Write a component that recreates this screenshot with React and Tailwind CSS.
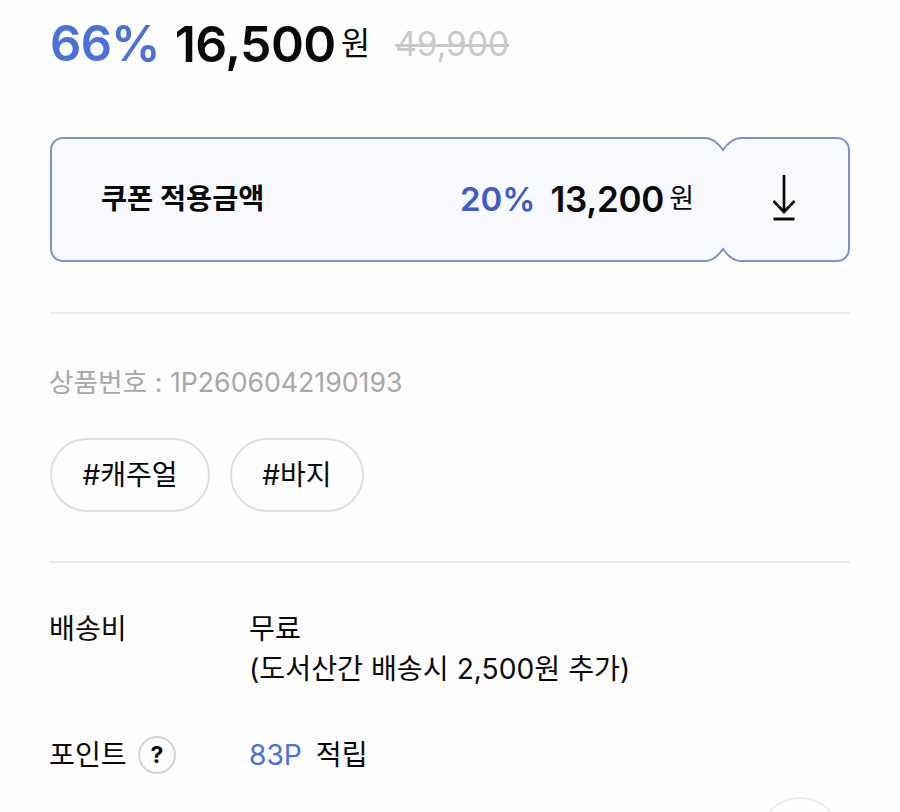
import React from 'react';

const Notch = ({ flip }) => (
  <svg
    width="44"
    height="16"
    viewBox="0 0 44 16"
    fill="none"
    className={flip ? 'absolute left-[649px] bottom-[-2px] rotate-180' : 'absolute left-[649px] top-[-2px]'}
  >
    <path d="M0 0H44V1H40C32 1 27 6 22 13C17 6 12 1 4 1H0Z" fill="#fdfdfd" />
    <path d="M0 1H4C12 1 17 6 22 13C27 6 32 1 40 1H44" stroke="#7e90d2" strokeWidth="2" />
  </svg>
);

const App = () => {
  return (
    <div className="relative h-[812px] w-[900px] overflow-hidden bg-[#fdfdfd] px-[50px] font-['Inter','Noto_Sans_CJK_KR',sans-serif] text-[#0a0a0a]">
      <div className="flex h-[88px] items-center">
        <span className="text-[49px] font-semibold tracking-[-0.7px] text-[#4a70d9]">66%</span>
        <span className="ml-[15px] text-[50px] font-semibold tracking-[-0.6px]">16,500</span>
        <span className="ml-[5px] text-[32px]">원</span>
        <span className="ml-[25px] text-[33.5px] text-[#c9c9c9] line-through">49,900</span>
      </div>

      <div className="relative mt-[49px] flex h-[125px] items-center rounded-[13px] border-2 border-[#7e90d2] bg-[#f8f9fe] pl-[49px]">
        <span className="text-[28.4px] font-bold">쿠폰 적용금액</span>
        <span className="ml-auto text-[33px] font-semibold text-[#3f5bc9]">20%</span>
        <span className="ml-[15px] text-[35px] font-semibold tracking-[-0.3px]">13,200</span>
        <span className="ml-[5px] text-[27px]">원</span>
        <svg width="24" height="46" viewBox="0 0 24 46" fill="none" stroke="#0a0a0a" className="mb-[3px] ml-[78px] mr-[52px]">
          <path d="M12 0V37" strokeWidth="2.7" />
          <path d="M1.5 26L12 37L22.5 26" strokeWidth="2.7" />
          <path d="M1.5 44H22.5" strokeWidth="3" />
        </svg>
        <Notch />
        <Notch flip />
      </div>

      <div className="mt-[50px] h-[2px] bg-[#ececec]" />

      <p className="-ml-px mt-[50px] text-[26.7px] leading-[36px] text-[#a8a8a8]">상품번호 : 1P2606042190193</p>

      <div className="mt-[38px] flex gap-[20px]">
        <span className="flex h-[74px] w-[160px] items-center justify-center rounded-full border-2 border-[#dfdfdf] text-[28px]">#캐주얼</span>
        <span className="flex h-[74px] w-[134px] items-center justify-center rounded-full border-2 border-[#dfdfdf] text-[28px]">#바지</span>
      </div>

      <div className="mt-[49px] h-[2px] bg-[#ececec]" />

      <div className="-ml-px mt-[46px] flex text-[28.2px] leading-[40px]">
        <span className="w-[200px]">배송비</span>
        <div>
          <p>무료</p>
          <p>(도서산간 배송시 2,500원 추가)</p>
        </div>
      </div>

      <div className="-ml-px mt-[46px] flex text-[28.2px] leading-[40px]">
        <div className="flex w-[200px] items-center">
          <span>포인트</span>
          <span className="ml-[11px] flex h-[38px] w-[38px] items-center justify-center rounded-full border-2 border-[#d4d4d4] text-[23px] font-bold">?</span>
        </div>
        <span className="text-[#4a70d9]">83P</span>
        <span className="ml-[14px]">적립</span>
      </div>

      <div className="absolute left-[758px] top-[797px] h-[84px] w-[84px] rounded-full border-2 border-[#ededed] bg-[#fdfdfd]" />
    </div>
  );
};

export default App;
